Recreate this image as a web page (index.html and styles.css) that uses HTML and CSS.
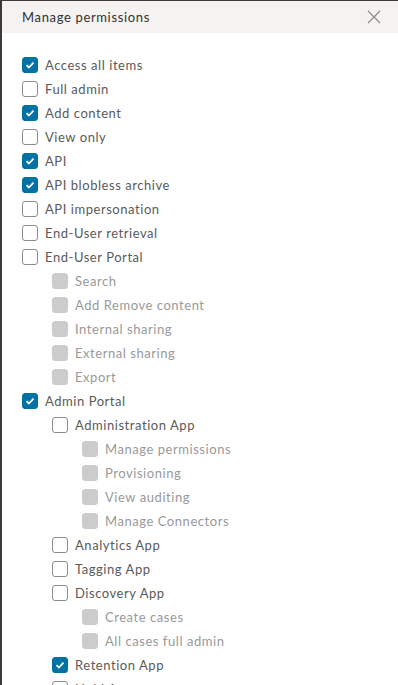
FILE: index.html
```html
<!DOCTYPE html>
<html>
<head>
<meta charset="utf-8"/>
<title>Manage permissions</title>
<link rel="stylesheet" href="styles.css">
</head>
<body>
<div class="modal">
  <div class="modal-header">
    <span class="modal-title">Manage permissions</span>
    <svg class="close" width="14" height="14" viewBox="0 0 14 14"><path d="M1 1L13 13M13 1L1 13" stroke="#8a8a8a" stroke-width="1.2" fill="none"/></svg>
  </div>
  <ul class="perms">
    <li class="on">Access all items</li>
    <li>Full admin</li>
    <li class="on">Add content</li>
    <li>View only</li>
    <li class="on">API</li>
    <li class="on">API blobless archive</li>
    <li>API impersonation</li>
    <li>End-User retrieval</li>
    <li>End-User Portal</li>
    <li class="l1 off">Search</li>
    <li class="l1 off">Add Remove content</li>
    <li class="l1 off">Internal sharing</li>
    <li class="l1 off">External sharing</li>
    <li class="l1 off">Export</li>
    <li class="on">Admin Portal</li>
    <li class="l1">Administration App</li>
    <li class="l2 off">Manage permissions</li>
    <li class="l2 off">Provisioning</li>
    <li class="l2 off">View auditing</li>
    <li class="l2 off">Manage Connectors</li>
    <li class="l1">Analytics App</li>
    <li class="l1">Tagging App</li>
    <li class="l1">Discovery App</li>
    <li class="l2 off">Create cases</li>
    <li class="l2 off">All cases full admin</li>
    <li class="l1 on">Retention App</li>
    <li class="l1">Hold App</li>
  </ul>
</div>
</body>
</html>
```

FILE: styles.css
```css
html,body{margin:0;padding:0;height:100%;}
body{background:#3b3b3b;overflow:hidden;font-family:Lato,"Open Sans",sans-serif;}
ul{margin:0;padding:0;}
li{list-style:none;}
.modal{margin:1px 0 0 2px;background:#fff;height:100%;}
.modal-header{height:32px;background:#f5f3f2;display:flex;align-items:center;justify-content:space-between;padding:0 17px 0 20px;}
.modal-title{font-size:13px;color:#313131;letter-spacing:0.65px;}
.close{display:block;}
.perms{padding:20px 0 0 20px;}
.perms li{height:24px;display:flex;align-items:center;gap:7px;font-size:13px;color:#5a5a5a;letter-spacing:0.55px;}
.perms li::before{content:"";width:14px;height:14px;border:1px solid #8c8c8c;border-radius:3px;background:#fff;flex:none;}
.perms li.on::before{border-color:#0072a3;background:#0072a3 url("data:image/svg+xml,%3Csvg xmlns='http://www.w3.org/2000/svg' width='16' height='16'%3E%3Cpath d='M4.5 8.2l2.4 2.3 4.6-4.8' stroke='white' stroke-width='1.8' fill='none'/%3E%3C/svg%3E") center/16px no-repeat;}
.perms li.off{color:#999;}
.perms li.off::before{border-color:#cccccc;background:#cccccc;}
.perms li.l1{padding-left:30px;}
.perms li.l2{padding-left:60px;}
```
